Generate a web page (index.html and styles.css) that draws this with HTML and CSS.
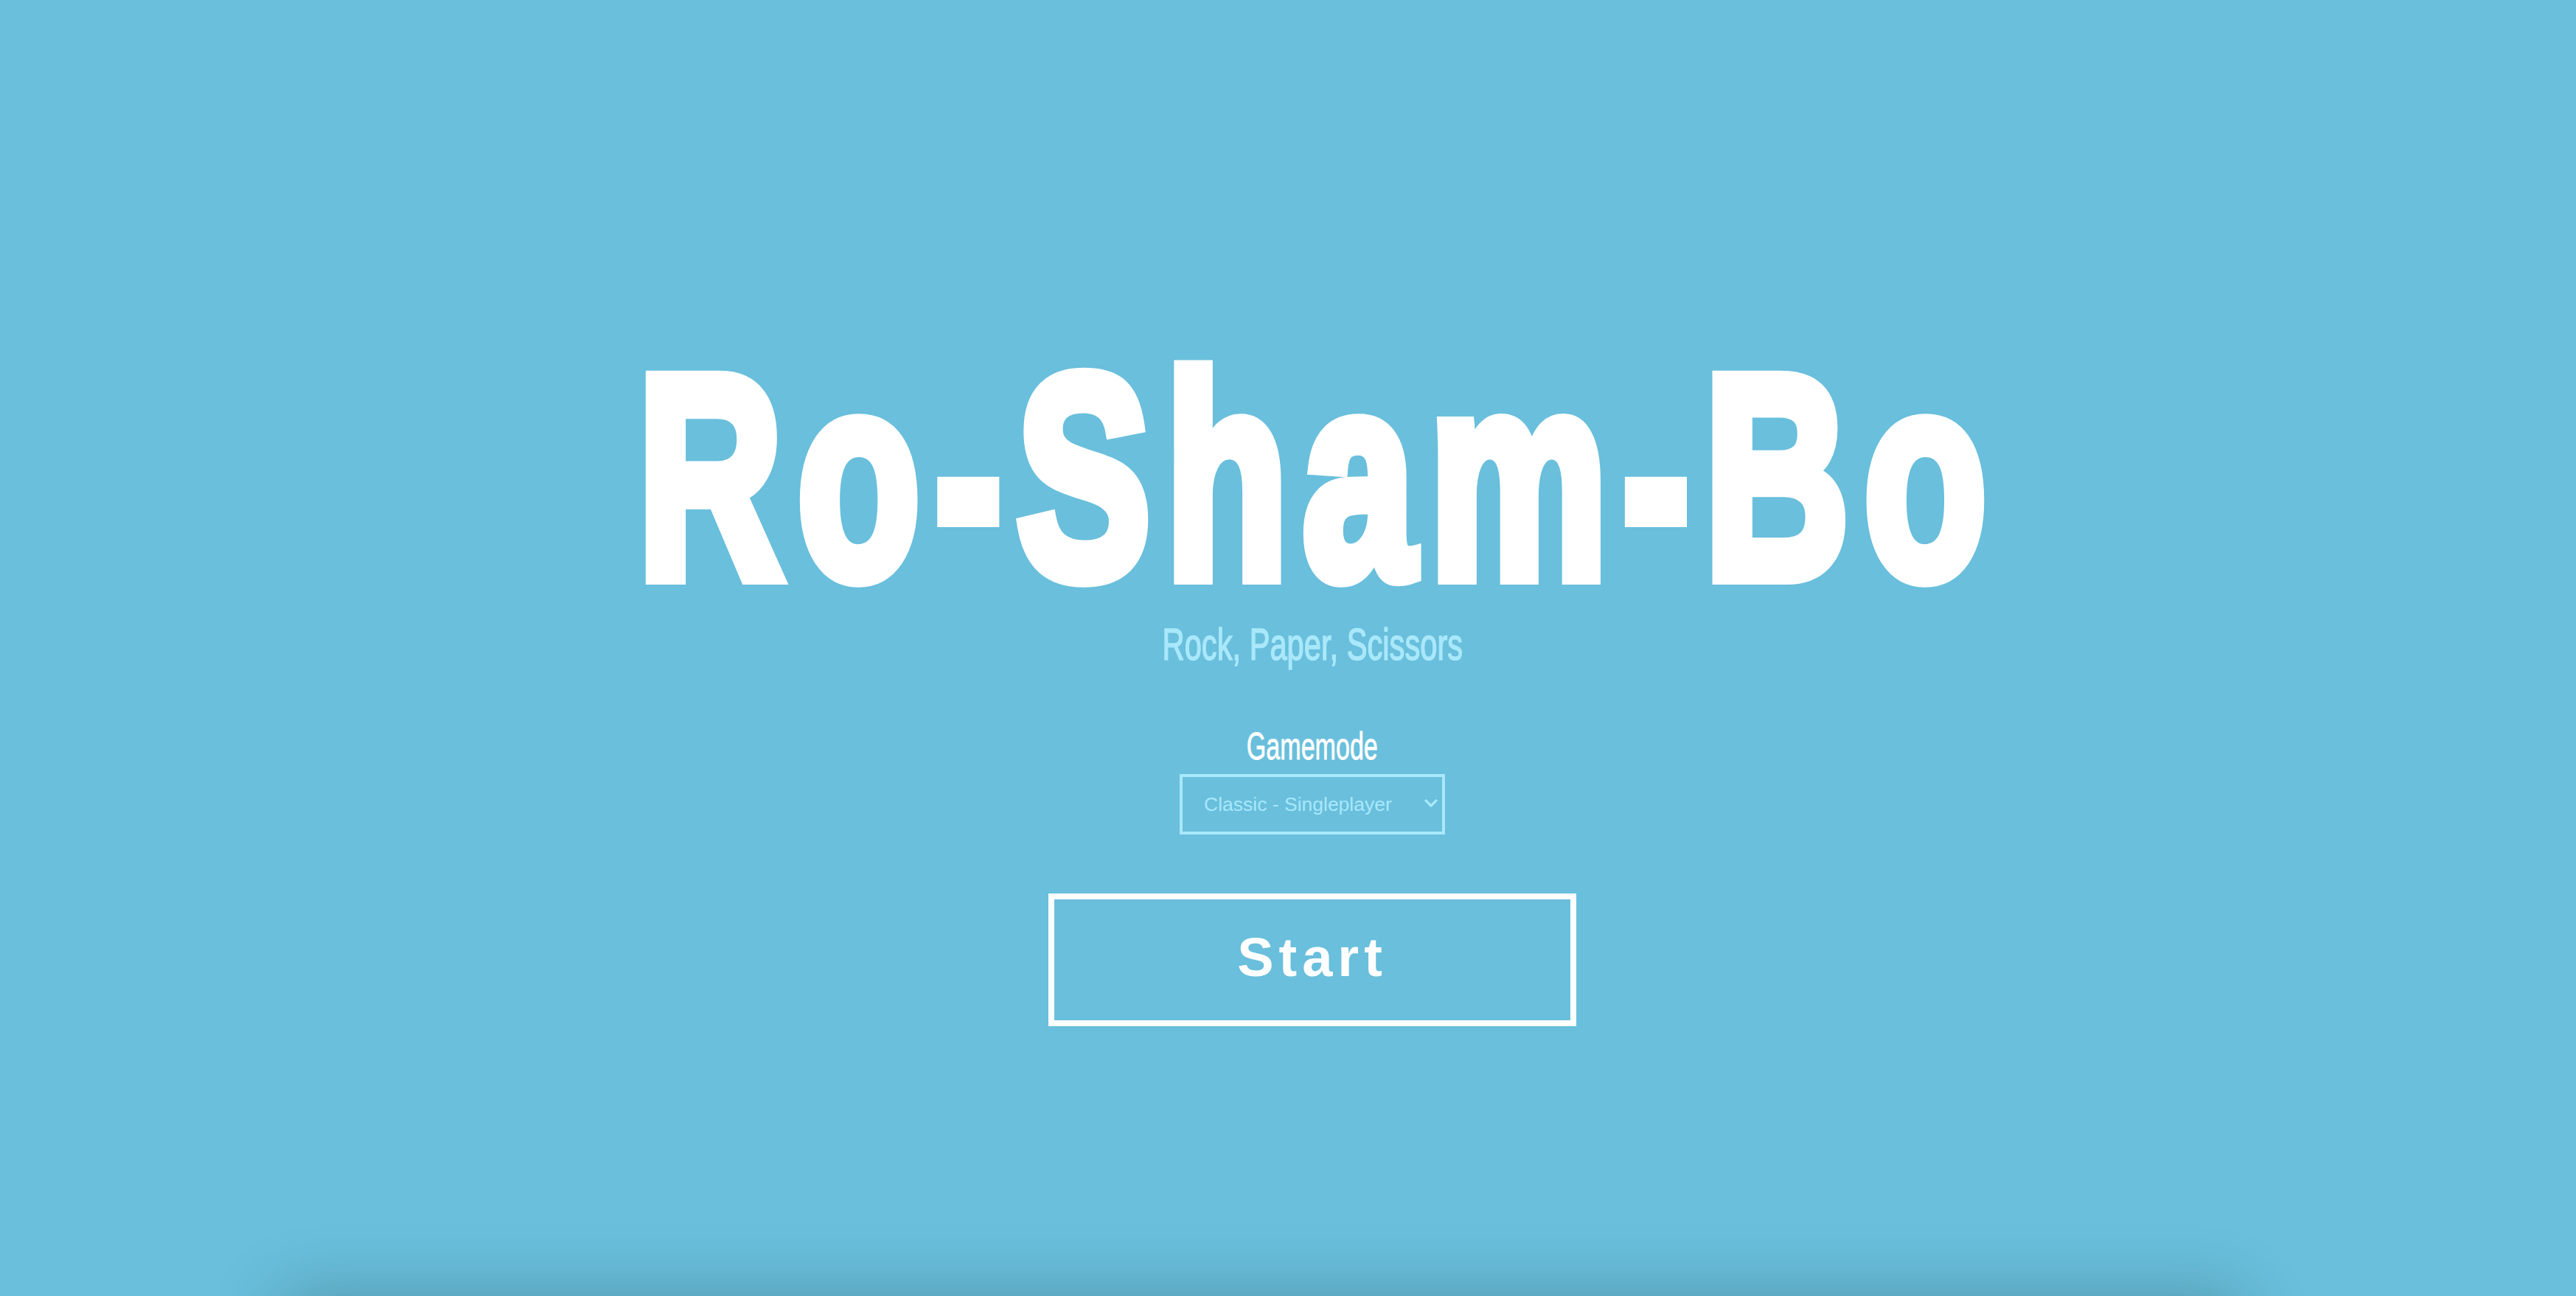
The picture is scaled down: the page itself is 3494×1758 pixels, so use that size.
FILE: index.html
```html
<!DOCTYPE html>
<html lang="en">
<head>
<meta charset="utf-8">
<title>Ro-Sham-Bo</title>
<link rel="stylesheet" href="styles.css">
</head>
<body>
<main class="hero">
  <h1 class="title">Ro-Sham-Bo</h1>
  <p class="subtitle">Rock, Paper, Scissors</p>
  <label class="mode-label" for="mode">Gamemode</label>
  <div class="select-wrap">
    <select id="mode" class="mode-select">
      <option>Classic - Singleplayer</option>
      <option>Classic - Multiplayer</option>
    </select>
    <svg class="chevron" width="18" height="12" viewBox="0 0 18 12" aria-hidden="true"><path d="M2 2 L9 9 L16 2" fill="none" stroke="#a9e8fb" stroke-width="3.2" stroke-linecap="round" stroke-linejoin="round"/></svg>
  </div>
  <button class="start-btn" type="button">Start</button>
</main>
<section class="game-card"></section>
</body>
</html>
```

FILE: styles.css
```css
html, body {
  margin: 0;
  padding: 0;
  background: #69bfdc;
}
body {
  font-family: "Liberation Sans", Arial, sans-serif;
  overflow-x: hidden;
}
.hero {
  height: 1758px;
  box-sizing: border-box;
  padding: 452px 0 0 66px;
  display: flex;
  flex-direction: column;
  align-items: center;
}
.title {
  margin: 0;
  padding-left: 30px;
  font-family: "Liberation Sans", Arial, sans-serif;
  font-weight: 700;
  font-size: 390px;
  line-height: 1;
  color: #ffffff;
  -webkit-text-stroke: 22px #ffffff;
  letter-spacing: 30px;
  white-space: nowrap;
  transform: scaleX(0.695);
}
.subtitle {
  margin: 2px 0 0;
  font-family: "Liberation Sans", Arial, sans-serif;
  font-size: 61px;
  line-height: 1;
  color: #a9e8fb;
  -webkit-text-stroke: 1.6px #a9e8fb;
  transform: scaleX(0.683);
  white-space: nowrap;
}
.mode-label {
  margin-top: 81px;
  font-family: "Liberation Sans", Arial, sans-serif;
  font-size: 52px;
  line-height: 1;
  color: #ffffff;
  -webkit-text-stroke: 0.8px #ffffff;
  transform: scaleX(0.655);
  white-space: nowrap;
}
.select-wrap {
  position: relative;
  margin-top: 12px;
  width: 360px;
  height: 82px;
}
.mode-select {
  -webkit-appearance: none;
  appearance: none;
  box-sizing: border-box;
  width: 100%;
  height: 100%;
  margin: 0;
  padding: 0 0 0 29px;
  border: 4px solid #a9e8fb;
  border-radius: 0;
  background: transparent;
  color: #a9e8fb;
  font-family: "Liberation Sans", Arial, sans-serif;
  font-size: 26.5px;
  outline: none;
}
.chevron {
  position: absolute;
  right: 10px;
  top: 34px;
  pointer-events: none;
}
.start-btn {
  margin-top: 80px;
  box-sizing: border-box;
  width: 716px;
  height: 180px;
  padding: 0 0 8px;
  border: 8px solid #ffffff;
  border-radius: 0;
  background: transparent;
  color: #ffffff;
  font-family: "Liberation Sans", Arial, sans-serif;
  font-weight: 700;
  font-size: 74px;
  letter-spacing: 7px;
  cursor: pointer;
}
.game-card {
  margin: 0 454px 0 380px;
  height: 600px;
  background: #69bfdc;
  box-shadow: 0 0 90px rgba(0, 0, 0, 0.22);
}
```
